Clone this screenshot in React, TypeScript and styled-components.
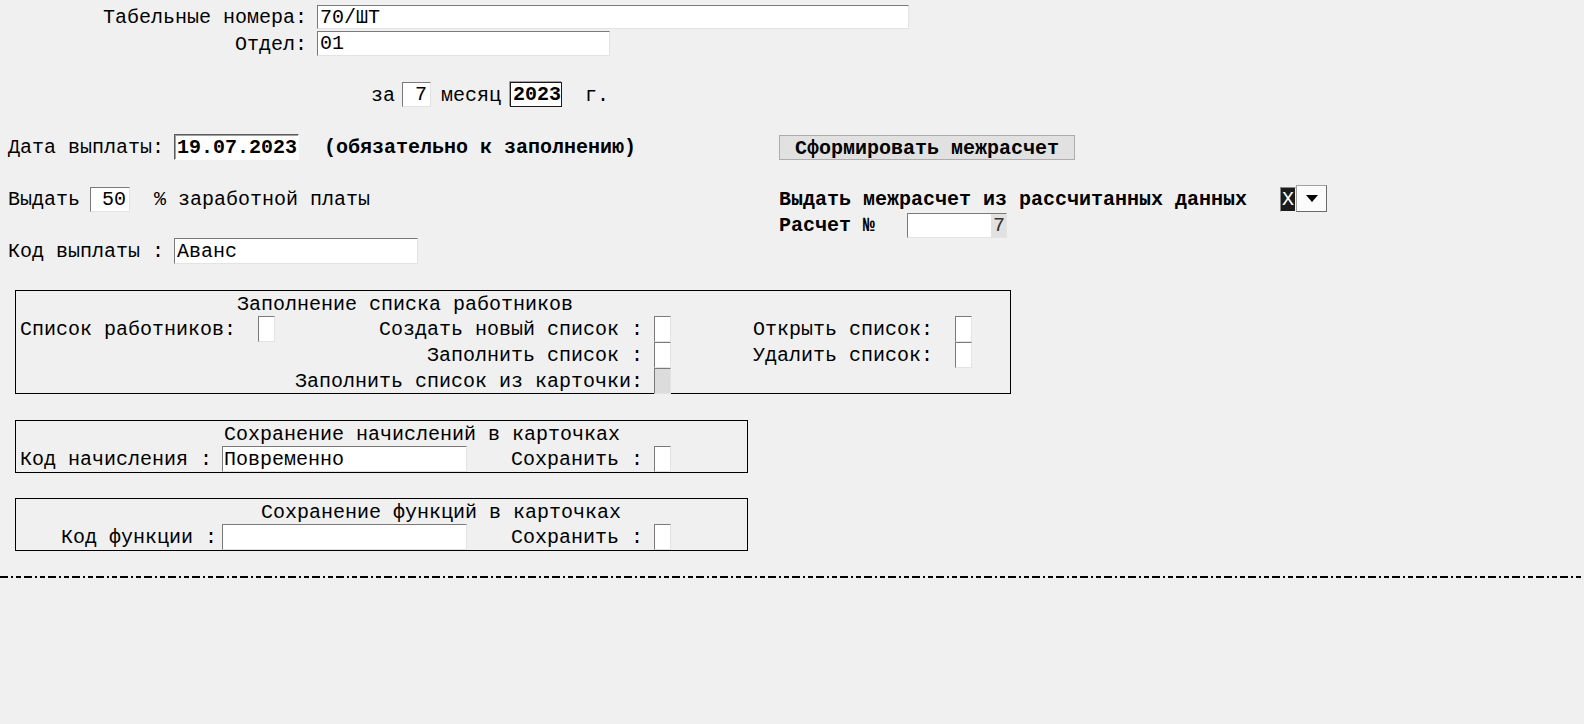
import React from "react";
import styled, { createGlobalStyle, css } from "styled-components";

const GlobalStyle = createGlobalStyle`
  html, body {
    margin: 0;
    padding: 0;
    background: #f0f0f0;
  }
  body {
    font-family: "Liberation Mono", "Courier New", monospace;
    font-size: 20px;
    line-height: 22px;
    color: #000;
  }
`;

const Page = styled.div`
  width: 1584px;
  height: 724px;
  box-sizing: border-box;
  padding-top: 5px;
  overflow: hidden;
`;

const Content = styled.div`
  padding-left: 8px;
`;

const IdGrid = styled.div`
  display: grid;
  grid-template-columns: 299px auto;
  column-gap: 10px;
  row-gap: 2px;
  align-items: center;
`;

const RightLabel = styled.span`
  text-align: right;
  white-space: pre;
  padding-top: 2px;
`;

const Text = styled.span<{ $ml?: number; $bold?: boolean }>`
  white-space: pre;
  padding-top: 2px;
  margin-left: ${(p) => p.$ml ?? 0}px;
  font-weight: ${(p) => (p.$bold ? 700 : 400)};
`;

type Variant = "plain" | "strong" | "date";

const Field = styled.div<{
  $w: number;
  $h?: number;
  $ml?: number;
  $right?: boolean;
  $bold?: boolean;
  $variant?: Variant;
}>`
  display: flex;
  align-items: center;
  justify-content: ${(p) => (p.$right ? "flex-end" : "flex-start")};
  box-sizing: border-box;
  width: ${(p) => p.$w}px;
  height: ${(p) => p.$h ?? 25}px;
  margin-left: ${(p) => p.$ml ?? 0}px;
  padding: 1px ${(p) => (p.$right ? 3 : 1)}px 0 2px;
  background: #fff;
  font-weight: ${(p) => (p.$bold ? 700 : 400)};
  white-space: pre;
  overflow: hidden;
  border: 1px solid;
  border-color: #7a7a7a #e3e3e3 #e3e3e3 #7a7a7a;
  ${(p) =>
    p.$variant === "strong" &&
    css`
      border-color: #1a1a1a;
      box-shadow: -1px -1px 0 #a0a0a0;
    `}
  ${(p) =>
    p.$variant === "date" &&
    css`
      border-color: #5a5a5a #ffffff #ffffff #5a5a5a;
      box-shadow: inset 1px 1px 0 #a0a0a0;
    `}
`;

const Row = styled.div<{ $mt?: number; $pl?: number; $h?: number }>`
  display: flex;
  align-items: center;
  height: ${(p) => p.$h ?? 25}px;
  margin-top: ${(p) => p.$mt ?? 0}px;
  padding-left: ${(p) => p.$pl ?? 0}px;
`;

const MainGrid = styled.div`
  display: grid;
  grid-template-columns: 771px 1fr;
  grid-template-rows: repeat(5, 26px);
  margin-top: 27px;
`;

const Cell = styled.div<{ $col: number; $row: number }>`
  grid-column: ${(p) => p.$col};
  grid-row: ${(p) => p.$row};
  display: flex;
  align-items: center;
`;

const ActionButton = styled.button`
  width: 296px;
  height: 25px;
  box-sizing: border-box;
  padding: 1px 0 0;
  background: #e1e1e1;
  border: 1px solid #adadad;
  font-family: inherit;
  font-size: 20px;
  font-weight: 700;
  color: #000;
  white-space: pre;
`;

const XBox = styled.div<{ $ml?: number }>`
  display: flex;
  align-items: center;
  justify-content: center;
  box-sizing: border-box;
  width: 16px;
  height: 25px;
  margin-left: ${(p) => p.$ml ?? 0}px;
  padding-top: 1px;
  background: #1c1c1c;
  color: #fff;
  border: 1px solid;
  border-color: #8a8a8a #f0f0f0 #f0f0f0 #8a8a8a;
  font-size: 20px;
`;

const DropButton = styled.div`
  display: flex;
  align-items: center;
  justify-content: center;
  box-sizing: border-box;
  width: 31px;
  height: 27px;
  margin-top: -2px;
  background: #fbfbfb;
  border: 1px solid;
  border-color: #a0a0a0 #6a6a6a #6a6a6a #a0a0a0;
`;

const GrayDigit = styled.span`
  display: inline-flex;
  align-items: center;
  justify-content: center;
  height: 23px;
  padding: 1px 1px 0 2px;
  box-sizing: border-box;
  margin-right: -3px;
  background: #e1e1e1;
  color: #333;
`;

const Group = styled.div<{ $w: number; $h: number; $mt: number }>`
  box-sizing: border-box;
  width: ${(p) => p.$w}px;
  height: ${(p) => p.$h}px;
  margin: ${(p) => p.$mt}px 0 0 7px;
  padding-left: 4px;
  border: 1px solid #000;
  display: grid;
  grid-template-columns: ${(p) =>
    p.$w > 800 ? "238px 17px 379px 17px 82px 202px 17px" : "202px 245px 187px 17px"};
  grid-template-rows: 25px;
  grid-auto-rows: 26px;
  align-items: center;
`;

const GroupTitle = styled.div<{ $pl: number }>`
  grid-column: 1 / -1;
  padding-left: ${(p) => p.$pl}px;
  padding-top: 2px;
  white-space: pre;
`;

const GLabel = styled.div<{ $span?: string; $right?: boolean; $pr?: number }>`
  ${(p) => p.$span && `grid-column: ${p.$span};`}
  text-align: ${(p) => (p.$right ? "right" : "left")};
  padding-right: ${(p) => p.$pr ?? 0}px;
  padding-top: 2px;
  white-space: pre;
`;

const Check = styled.div<{ $col?: number; $disabled?: boolean }>`
  ${(p) => p.$col && `grid-column: ${p.$col};`}
  box-sizing: border-box;
  width: 17px;
  height: 26px;
  background: ${(p) => (p.$disabled ? "#dcdcdc" : "#fff")};
  border: 1px solid;
  border-color: #7a7a7a #e3e3e3 #e3e3e3 #7a7a7a;
`;

const GField = styled.div<{ $col: number }>`
  grid-column: ${(p) => p.$col};
  box-sizing: border-box;
  height: 26px;
  width: 245px;
  padding: 1px 0 0 1px;
  display: flex;
  align-items: center;
  background: #fff;
  white-space: pre;
  border: 1px solid;
  border-color: #7a7a7a #e3e3e3 #e3e3e3 #7a7a7a;
`;

const DashLine = styled.div`
  margin-top: 25px;
  height: 2px;
  width: 100%;
  background: repeating-linear-gradient(
    to right,
    #000 0 8px,
    transparent 8px 11px,
    #000 11px 13px,
    transparent 13px 16px,
    #000 16px 21px,
    transparent 21px 24px
  );
`;

const Triangle = () => (
  <svg width="12" height="7" viewBox="0 0 12 7">
    <path d="M0 0 H12 L6 7 Z" fill="#000" />
  </svg>
);

export default function App() {
  return (
    <>
      <GlobalStyle />
      <Page>
        <Content>
          <IdGrid>
            <RightLabel>Табельные номера:</RightLabel>
            <Field $w={592} $h={24}>70/ШТ</Field>
            <RightLabel>Отдел:</RightLabel>
            <Field $w={293}>01</Field>
          </IdGrid>

          <Row $mt={26} $pl={363}>
            <Text>за</Text>
            <Field $w={29} $ml={7} $right>7</Field>
            <Text $ml={10}>месяц</Text>
            <Field $w={52} $ml={9} $bold $variant="strong">2023</Field>
            <Text $ml={23}>г.</Text>
          </Row>

          <MainGrid>
            <Cell $col={1} $row={1}>
              <Text>Дата выплаты:</Text>
              <Field $w={125} $h={26} $ml={10} $bold $variant="date">19.07.2023</Field>
              <Text $ml={25} $bold>(обязательно к заполнению)</Text>
            </Cell>
            <Cell $col={2} $row={1}>
              <ActionButton>Сформировать межрасчет</ActionButton>
            </Cell>

            <Cell $col={1} $row={3}>
              <Text>Выдать</Text>
              <Field $w={40} $ml={10} $right>50</Field>
              <Text $ml={24}>% заработной платы</Text>
            </Cell>
            <Cell $col={2} $row={3}>
              <Text $bold>Выдать межрасчет из рассчитанных данных</Text>
              <XBox $ml={33}>X</XBox>
              <DropButton>
                <Triangle />
              </DropButton>
            </Cell>

            <Cell $col={2} $row={4}>
              <Text $bold>Расчет №</Text>
              <Field $w={100} $ml={32} $right>
                <GrayDigit>7</GrayDigit>
              </Field>
            </Cell>

            <Cell $col={1} $row={5}>
              <Text>Код выплаты :</Text>
              <Field $w={244} $h={26} $ml={10}>Аванс</Field>
            </Cell>
          </MainGrid>

          <Group $w={996} $h={104} $mt={26}>
            <GroupTitle $pl={217}>Заполнение списка работников</GroupTitle>

            <GLabel>Список работников:</GLabel>
            <Check $col={2} />
            <GLabel $right $pr={11}>Создать новый список :</GLabel>
            <Check />
            <div />
            <GLabel>Открыть список:</GLabel>
            <Check />

            <GLabel $span="1 / 4" $right $pr={11}>Заполнить список :</GLabel>
            <Check />
            <div />
            <GLabel>Удалить список:</GLabel>
            <Check />

            <GLabel $span="1 / 4" $right $pr={11}>Заполнить список из карточки:</GLabel>
            <Check $disabled />
          </Group>

          <Group $w={733} $h={53} $mt={26}>
            <GroupTitle $pl={204}>Сохранение начислений в карточках</GroupTitle>
            <GLabel>Код начисления :</GLabel>
            <GField $col={2}>Повременно</GField>
            <GLabel $right $pr={11}>Сохранить :</GLabel>
            <Check />
          </Group>

          <Group $w={733} $h={53} $mt={25}>
            <GroupTitle $pl={241}>Сохранение функций в карточках</GroupTitle>
            <GLabel $right $pr={5}>Код функции :</GLabel>
            <GField $col={2} />
            <GLabel $right $pr={11}>Сохранить :</GLabel>
            <Check />
          </Group>
        </Content>
        <DashLine />
      </Page>
    </>
  );
}
